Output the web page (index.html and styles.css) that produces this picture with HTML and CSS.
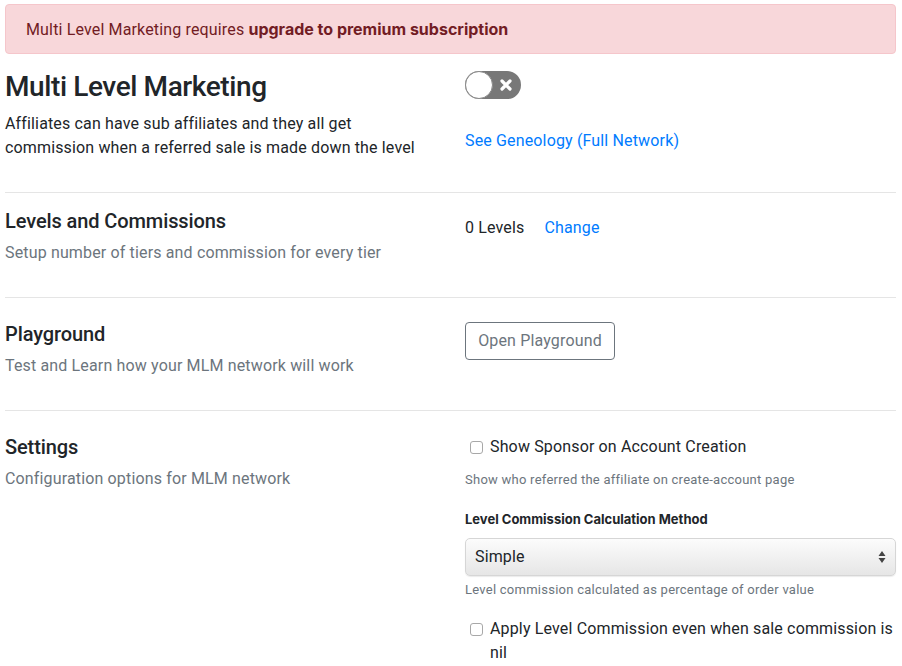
FILE: index.html
```html
<!DOCTYPE html>
<html lang="en">
<head>
<meta charset="utf-8">
<title>Multi Level Marketing</title>
<link rel="stylesheet" href="styles.css">
</head>
<body>
<div class="page">
  <div class="alert">Multi Level Marketing requires <strong>upgrade to premium subscription</strong></div>

  <section class="row row-first">
    <div class="col">
      <h3 class="title">Multi Level Marketing</h3>
      <p class="lead-text">Affiliates can have sub affiliates and they all get commission when a referred sale is made down the level</p>
    </div>
    <div class="col">
      <div class="toggle">
        <span class="knob"></span>
        <svg class="toggle-x" width="12" height="12" viewBox="0 0 12 12"><path d="M2 2 L10 10 M10 2 L2 10" stroke="#fff" stroke-width="3.2" stroke-linecap="round"/></svg>
      </div>
      <a class="link geneology" href="#">See Geneology (Full Network)</a>
    </div>
  </section>
  <hr>

  <section class="row row-tight">
    <div class="col">
      <h5 class="heading">Levels and Commissions</h5>
      <p class="muted">Setup number of tiers and commission for every tier</p>
    </div>
    <div class="col">
      <div class="levels"><span>0 Levels</span><a class="link" href="#">Change</a></div>
    </div>
  </section>
  <hr>

  <section class="row">
    <div class="col">
      <h5 class="heading">Playground</h5>
      <p class="muted">Test and Learn how your MLM network will work</p>
    </div>
    <div class="col">
      <button class="btn-outline" type="button">Open Playground</button>
    </div>
  </section>
  <hr>

  <section class="row">
    <div class="col">
      <h5 class="heading">Settings</h5>
      <p class="muted">Configuration options for MLM network</p>
    </div>
    <div class="col">
      <label class="check"><span class="box"></span><span>Show Sponsor on Account Creation</span></label>
      <div class="form-text hint-1">Show who referred the affiliate on create-account page</div>
      <div class="field-label">Level Commission Calculation Method</div>
      <div class="select"><span>Simple</span>
        <svg class="arrows" width="8" height="14" viewBox="0 0 8 14"><path d="M4 1 L7.5 6 H0.5 Z M4 13 L7.5 8 H0.5 Z" fill="#444"/></svg>
      </div>
      <div class="form-text">Level commission calculated as percentage of order value</div>
      <label class="check check-last"><span class="box"></span><span>Apply Level Commission even when sale commission is nil</span></label>
    </div>
  </section>
</div>
</body>
</html>
```

FILE: styles.css
```css
* { box-sizing: border-box; }
html, body { margin: 0; padding: 0; background: #fff; }
body {
  font-family: Roboto, "Liberation Sans", Arial, sans-serif;
  font-size: 16px;
  line-height: 24px;
  letter-spacing: 0.15px;
  color: #212529;
}
.page { padding: 4px 6px 0 5px; }

.alert {
  background: #f8d7da;
  border: 1px solid #f5c6cb;
  color: #721c24;
  border-radius: 4px;
  padding: 11.5px 20px;
  margin-bottom: 16px;
}
.alert strong {
  font-family: Inter, Roboto, sans-serif;
  font-weight: 700;
  letter-spacing: 0;
}

.row {
  display: grid;
  grid-template-columns: 430px 1fr;
  column-gap: 30px;
  padding-top: 24px;
}
.row-first { padding-top: 0; }
.row-tight { padding-top: 16px; }
.col { min-width: 0; }

.title {
  font-size: 28px;
  line-height: 33.6px;
  font-weight: 500;
  letter-spacing: -0.4px;
  margin: 0 0 8px;
}
.lead-text { margin: 0 0 16px; }

.heading {
  font-size: 20px;
  line-height: 24px;
  font-weight: 500;
  letter-spacing: -0.1px;
  margin: 0 0 8px;
}
.muted { color: #6c757d; margin: 0 0 16px; }

hr {
  border: 0;
  border-top: 1px solid rgba(0,0,0,.1);
  margin: 16px 0 0;
}

.link { color: #007bff; text-decoration: none; }

.toggle {
  position: relative;
  width: 56px;
  height: 28px;
  margin-top: 1px;
  border-radius: 14px;
  background: #787878;
}
.knob {
  position: absolute;
  left: 0; top: 0;
  width: 28px; height: 28px;
  border-radius: 50%;
  background: #fff;
  border: 1px solid #8a8a8a;
}
.toggle-x { position: absolute; left: 35px; top: 8px; }
.geneology { display: block; margin-top: 30px; }

.levels { display: flex; gap: 20px; padding-top: 7px; }

.btn-outline {
  font-family: inherit;
  font-size: 16px;
  line-height: 24px;
  letter-spacing: 0.15px;
  color: #6c757d;
  background: #fff;
  border: 1px solid #6c757d;
  border-radius: 4px;
  padding: 6px 12px;
  height: 38px;
  width: 150px;
}

.check { display: flex; align-items: flex-start; gap: 7px; }
.box {
  flex: 0 0 auto;
  width: 13px; height: 13px;
  margin: 6px 0 0 5px;
  border: 1px solid #a8a8a8;
  border-radius: 3px;
  background: #fff;
}
.form-text {
  font-size: 13px;
  line-height: 19.5px;
  letter-spacing: 0.25px;
  color: #6c757d;
  margin-top: 4px;
}
.hint-1 { margin-top: 11px; }
.field-label {
  font-family: Inter, Roboto, sans-serif;
  font-size: 13px;
  line-height: 19.5px;
  font-weight: 700;
  letter-spacing: 0;
  margin-top: 21px;
}
.select {
  display: flex;
  align-items: center;
  justify-content: space-between;
  margin-top: 8px;
  height: 38px;
  padding: 0 9px;
  border: 1px solid #d6d6d6;
  border-radius: 5px;
  background: linear-gradient(#fcfcfc, #e6e6e6);
  box-shadow: 0 1px 1px rgba(0,0,0,.08);
}
.check-last { margin-top: 18px; }
```
